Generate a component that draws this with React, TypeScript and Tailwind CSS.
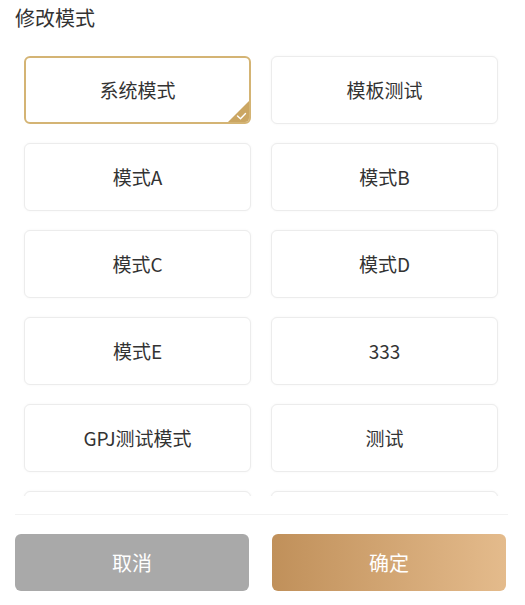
import clsx from "clsx";

const modes = ["系统模式", "模板测试", "模式A", "模式B", "模式C", "模式D", "模式E", "333", "GPJ测试模式", "测试", "", ""];

function ModeCard({ label, active }: { label: string; active?: boolean }) {
  return (
    <div
      className={clsx(
        "relative flex h-[68px] items-center justify-center overflow-hidden rounded-[6px] bg-white text-[19px] text-[#333]",
        active ? "border-2 border-[#d4b474]" : "border border-[#ececec] shadow-[0_0_3px_rgba(0,0,0,0.04)]",
      )}
    >
      {label}
      {active && (
        <svg className="absolute bottom-0 right-0" width="21" height="21" viewBox="0 0 21 21">
          <path d="M21 0 L21 21 L0 21 Z" fill="#cba662" />
          <path d="M9.5 15 L12.5 17.8 L17.5 12.5" fill="none" stroke="#fff" strokeWidth="1.4" strokeLinecap="round" strokeLinejoin="round" />
        </svg>
      )}
    </div>
  );
}

export default function App() {
  return (
    <div className="h-[605px] w-[525px] bg-white px-[15px] font-['Noto_Sans_CJK_SC','Noto_Sans',sans-serif]">
      <h1 className="pt-1 text-[20px] leading-7 text-[#333]">修改模式</h1>

      <div className="mt-[14px] h-[450px] overflow-hidden pt-[10px]">
        <div className="grid grid-cols-[227px_227px] gap-x-[20px] gap-y-[19px] pl-[9px]">
          {modes.map((m, i) => (
            <ModeCard key={i} label={m} active={i === 0} />
          ))}
        </div>
      </div>

      <div className="mt-[18px] h-px w-[493px] bg-[#f2f2f2]" />

      <div className="mt-[19px] flex gap-[23px]">
        <button className="flex h-[57px] w-[234px] items-center justify-center rounded-[6px] bg-[#a9a9a9] text-[20px] text-white">
          取消
        </button>
        <button className="flex h-[57px] w-[234px] items-center justify-center rounded-[6px] bg-gradient-to-r from-[#c0905a] to-[#e4bb8c] text-[20px] text-white">
          确定
        </button>
      </div>
    </div>
  );
}
